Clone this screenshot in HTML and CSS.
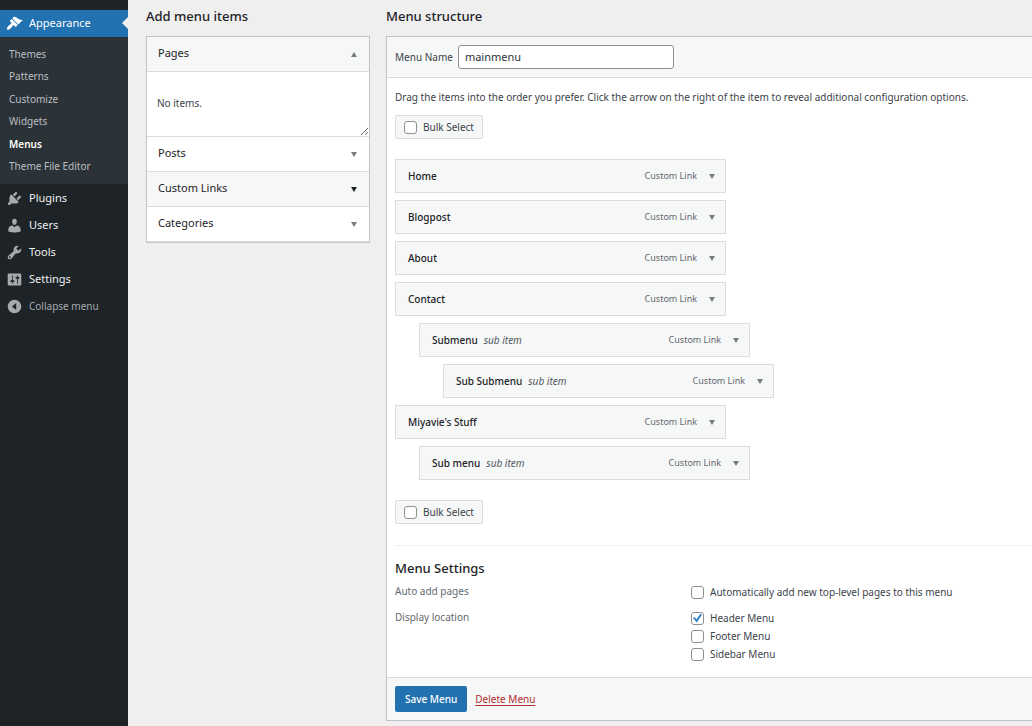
FILE: index.html
```html
<!DOCTYPE html>
<html lang="en">
<head>
<meta charset="utf-8">
<meta name="viewport" content="width=device-width, initial-scale=1">
<title>Menus</title>
<link rel="stylesheet" href="styles.css">
</head>
<body>
<div class="layout">
  <nav class="sidebar" aria-label="Main menu">
    <a class="nav-item current" href="#">
      <svg class="icon" viewBox="0 0 20 20" aria-hidden="true"><path d="M14.48 11.06L7.41 3.99l1.5-1.5c.5-.56 2.3-.47 3.51.32 1.21.8 1.43 1.28 2.91 2.1 1.18.64 2.45 1.26 4.45.85zm-.71.71L6.7 4.7 4.93 6.47c-.39.39-.39 1.02 0 1.41l1.06 1.06c.39.39.39 1.03 0 1.42-.6.6-1.43 1.11-2.21 1.69-.35.26-.7.53-1.01.84C1.43 14.23.4 16.08 1.4 17.07c.99 1 2.84-.03 4.18-1.36.31-.31.58-.66.85-1.02.57-.78 1.08-1.61 1.69-2.21.39-.39 1.02-.39 1.41 0l1.06 1.06c.39.39 1.02.39 1.41 0z"/></svg>
      Appearance
    </a>
    <ul class="submenu">
      <li><a href="#">Themes</a></li>
      <li><a href="#">Patterns</a></li>
      <li><a href="#">Customize</a></li>
      <li><a href="#">Widgets</a></li>
      <li><a class="active" href="#">Menus</a></li>
      <li><a href="#">Theme File Editor</a></li>
    </ul>
    <a class="nav-item" href="#">
      <svg class="icon" viewBox="0 0 20 20" aria-hidden="true"><path d="M13.11 4.36L9.87 7.6 8 5.73l3.24-3.24c.35-.34 1.05-.2 1.56.32.52.51.66 1.21.31 1.55zm-8 1.77l.91-1.12 9.01 9.01-1.19.84c-.71.71-2.63 1.16-3.82 1.16H6.14L4.9 17.26c-.59.59-1.54.59-2.12 0-.59-.58-.59-1.53 0-2.12l1.24-1.24v-3.88c0-1.13.4-3.19 1.09-3.89zm7.26 3.97l3.24-3.24c.34-.35 1.04-.21 1.55.31.52.51.66 1.21.31 1.55l-3.24 3.25z"/></svg>
      Plugins
    </a>
    <a class="nav-item" href="#">
      <svg class="icon" viewBox="0 0 20 20" aria-hidden="true"><path d="M10 9.25c-2.27 0-2.73-3.44-2.73-3.44C7 4.02 7.82 2 9.97 2c2.16 0 2.98 2.02 2.71 3.81 0 0-.41 3.44-2.68 3.44zm0 2.57L12.72 10c2.39 0 4.52 2.33 4.52 4.53v2.49s-3.65 1.13-7.24 1.13c-3.65 0-7.24-1.13-7.24-1.13v-2.49c0-2.25 1.94-4.48 4.47-4.48z"/></svg>
      Users
    </a>
    <a class="nav-item" href="#">
      <svg class="icon" viewBox="0 0 20 20" aria-hidden="true"><path d="M16.68 9.77c-1.34 1.34-3.3 1.67-4.95.99l-5.41 6.52c-.99.99-2.59.99-3.58 0s-.99-2.59 0-3.57l6.52-5.42c-.68-1.65-.35-3.61.99-4.95 1.28-1.28 3.12-1.62 4.72-1.06l-2.89 2.89 2.82 2.82 2.86-2.87c.53 1.58.18 3.39-1.08 4.65zM3.81 16.21c.4.39 1.04.39 1.43 0 .4-.4.4-1.04 0-1.43-.39-.4-1.03-.4-1.43 0-.39.39-.39 1.03 0 1.43z"/></svg>
      Tools
    </a>
    <a class="nav-item" href="#">
      <svg class="icon" viewBox="0 0 20 20" aria-hidden="true"><path fill-rule="evenodd" d="M18 16V4c0-.55-.45-1-1-1H3c-.55 0-1 .45-1 1v12c0 .55.45 1 1 1h14c.55 0 1-.45 1-1zM8 11h1c.55 0 1 .45 1 1s-.45 1-1 1H8v1.500c0 .28-.22.5-.5.5s-.5-.22-.5-.5V13H6c-.55 0-1-.45-1-1s.45-1 1-1h1V5.500c0-.28.22-.5.5-.5s.5.22.5.5zm5-2h-1c-.55 0-1-.45-1-1s.45-1 1-1h1V5.500c0-.28.22-.5.5-.5s.5.22.5.5V7h1c.55 0 1 .45 1 1s-.45 1-1 1h-1v5.500c0 .28-.22.5-.5.5s-.5-.22-.5-.5z"/></svg>
      Settings
    </a>
    <button class="nav-item collapse" type="button">
      <svg class="icon" viewBox="0 0 20 20" aria-hidden="true"><path fill-rule="evenodd" d="M10 2a8 8 0 1 0 0 16a8 8 0 1 0 0-16zM12 6v8L7 10z"/></svg>
      Collapse menu
    </button>
  </nav>

  <main class="content">
    <section class="add-items">
      <h2 class="title">Add menu items</h2>
      <div class="accordion">
        <button class="acc-head shaded" type="button" aria-expanded="true">Pages <span class="arrow up"></span></button>
        <div class="acc-body"><p>No items.</p></div>
        <button class="acc-head" type="button" aria-expanded="false">Posts <span class="arrow"></span></button>
        <button class="acc-head shaded hovered" type="button" aria-expanded="false">Custom Links <span class="arrow"></span></button>
        <button class="acc-head" type="button" aria-expanded="false">Categories <span class="arrow"></span></button>
      </div>
    </section>

    <section class="structure">
      <h2 class="title">Menu structure</h2>
      <form class="panel">
        <div class="panel-head">
          <label for="menu-name">Menu Name</label>
          <input class="text-input" id="menu-name" type="text" value="mainmenu">
        </div>
        <div class="panel-body">
          <p class="hint">Drag the items into the order you prefer. Click the arrow on the right of the item to reveal additional configuration options.</p>
          <label class="bulk"><input class="check" type="checkbox"> Bulk Select</label>
          <ul class="items">
            <li class="item"><span class="name">Home</span><span class="type">Custom Link</span><button class="toggle" type="button" aria-label="Edit Home"><span class="arrow"></span></button></li>
            <li class="item"><span class="name">Blogpost</span><span class="type">Custom Link</span><button class="toggle" type="button" aria-label="Edit Blogpost"><span class="arrow"></span></button></li>
            <li class="item"><span class="name">About</span><span class="type">Custom Link</span><button class="toggle" type="button" aria-label="Edit About"><span class="arrow"></span></button></li>
            <li class="item"><span class="name">Contact</span><span class="type">Custom Link</span><button class="toggle" type="button" aria-label="Edit Contact"><span class="arrow"></span></button></li>
            <li class="item depth-1"><span class="name">Submenu</span><i class="sub">sub item</i><span class="type">Custom Link</span><button class="toggle" type="button" aria-label="Edit Submenu"><span class="arrow"></span></button></li>
            <li class="item depth-2"><span class="name">Sub Submenu</span><i class="sub">sub item</i><span class="type">Custom Link</span><button class="toggle" type="button" aria-label="Edit Sub Submenu"><span class="arrow"></span></button></li>
            <li class="item"><span class="name">Miyavie's Stuff</span><span class="type">Custom Link</span><button class="toggle" type="button" aria-label="Edit Miyavie's Stuff"><span class="arrow"></span></button></li>
            <li class="item depth-1"><span class="name">Sub menu</span><i class="sub">sub item</i><span class="type">Custom Link</span><button class="toggle" type="button" aria-label="Edit Sub menu"><span class="arrow"></span></button></li>
          </ul>
          <label class="bulk"><input class="check" type="checkbox"> Bulk Select</label>
          <div class="settings">
            <h3 class="title">Menu Settings</h3>
            <div class="setting" role="group" aria-labelledby="auto-add">
              <span class="legend" id="auto-add">Auto add pages</span>
              <div class="options">
                <label class="option"><input class="check" type="checkbox"> Automatically add new top-level pages to this menu</label>
              </div>
            </div>
            <div class="setting" role="group" aria-labelledby="location">
              <span class="legend" id="location">Display location</span>
              <div class="options">
                <label class="option"><input class="check" type="checkbox" checked> Header Menu</label>
                <label class="option"><input class="check" type="checkbox"> Footer Menu</label>
                <label class="option"><input class="check" type="checkbox"> Sidebar Menu</label>
              </div>
            </div>
          </div>
        </div>
        <div class="panel-foot">
          <button class="save" type="submit">Save Menu</button>
          <a class="delete" href="#">Delete Menu</a>
        </div>
      </form>
    </section>
  </main>
</div>
</body>
</html>
```

FILE: styles.css
```css
* { box-sizing: border-box; }

body {
  margin: 0;
  background: #efefef;
  color: #3c434a;
  font: 10px/16px "Noto Sans", "Open Sans", sans-serif;
}

p, ul, h2, h3 { margin: 0; padding: 0; }
ul { list-style: none; }
button, input { font: inherit; color: inherit; }
button { cursor: pointer; }

.layout { display: flex; min-height: 100vh; }

/* Sidebar */
.sidebar {
  flex: none;
  width: 128px;
  padding-top: 10px;
  background: #1d2327;
}

.nav-item {
  display: flex;
  align-items: center;
  gap: 6px;
  width: 100%;
  height: 27px;
  padding: 0 6px 1px;
  border: 0;
  background: none;
  color: #f0f0f1;
  font-size: 11px;
  text-decoration: none;
}

.icon { width: 17px; height: 17px; fill: #a7aaad; }

.current { position: relative; background: #2271b1; color: #fff; }
.current .icon { fill: #fff; }
.current::after {
  content: "";
  position: absolute;
  right: 0;
  top: 7px;
  border: 6px solid transparent;
  border-left-width: 0;
  border-right-color: #efefef;
}

.collapse { color: #a7aaad; font-size: 10px; }

.submenu {
  display: flex;
  flex-direction: column;
  justify-content: space-between;
  min-height: 147px;
  margin-bottom: 1px;
  padding: 6px 9px 7px;
  background: #2c3338;
  line-height: 22px;
}
.submenu a { color: #bbbec1; text-decoration: none; }
.submenu .active { color: #fff; font-weight: 600; }

/* Content */
.content {
  flex: 1;
  display: flex;
  align-items: flex-start;
  gap: 16px;
  min-width: 0;
  padding: 6px 0 5px 18px;
}

.title {
  color: #1d2327;
  font-size: 13px;
  line-height: 20px;
  font-weight: 500;
}

.add-items { flex: none; width: 224px; }

.accordion {
  margin-top: 10px;
  border: 1px solid #c3c4c7;
  background: #fff;
}

.acc-head {
  display: flex;
  align-items: center;
  justify-content: space-between;
  width: 100%;
  height: 35px;
  padding: 0 11px 2px;
  border: 0;
  border-bottom: 1px solid #dcdcde;
  background: #fff;
  color: #1d2327;
  font-size: 11px;
}
.shaded { background: #f6f7f7; }

.acc-body {
  height: 65px;
  padding: 23px 10px;
  border-bottom: 1px solid #dcdcde;
  overflow: auto;
  resize: vertical;
}

.arrow {
  border: 3px solid transparent;
  border-top: 5px solid #787c82;
  border-bottom-width: 0;
}
.acc-head .arrow { margin: 2px 1px 0 0; }
.arrow.up {
  border-top-width: 0;
  border-bottom: 5px solid #787c82;
}
.hovered .arrow { border-top-color: #1d2327; }

/* Menu editor */
.structure { flex: 1; min-width: 0; }

.panel {
  margin-top: 10px;
  border: 1px solid #c3c4c7;
  border-right: 0;
  background: #fff;
}

.panel-head {
  display: flex;
  align-items: center;
  gap: 5px;
  padding: 8px;
  border-bottom: 1px solid #dcdcde;
  background: #f6f7f7;
}

.text-input {
  width: 216px;
  height: 24px;
  padding: 0 6px 1px;
  border: 1px solid #8c8f94;
  border-radius: 3px;
  background: #fff;
  color: #2c3338;
  font-size: 11px;
}

.panel-body { padding: 11px 0 14px 8px; }

.bulk {
  display: inline-flex;
  align-items: center;
  gap: 6px;
  height: 24px;
  margin-top: 10px;
  padding: 0 8px;
  border: 1px solid #dcdcde;
  border-radius: 2px;
  background: #f6f7f7;
  vertical-align: top;
}

.check {
  flex: none;
  display: grid;
  place-items: center;
  width: 13px;
  height: 13px;
  margin: 0;
  border: 1px solid #8c8f94;
  border-radius: 3px;
  background: #fff;
  appearance: none;
}
.check:checked::before {
  content: "";
  width: 9px;
  height: 9px;
  background: #3582c4;
  clip-path: polygon(0 50%, 18% 40%, 38% 64%, 82% 4%, 100% 14%, 42% 100%);
}

.items {
  display: flex;
  flex-direction: column;
  gap: 7px;
  margin: 20px 0 10px;
}

.item {
  display: flex;
  align-items: center;
  width: 331px;
  height: 34px;
  padding: 0 10px 0 12px;
  border: 1px solid #dcdcde;
  background: #f6f7f7;
}
.depth-1 { margin-left: 24px; }
.depth-2 { margin-left: 48px; }

.name { color: #1d2327; font-weight: 500; }
.sub { margin-left: 6px; color: #50575e; }
.type { margin-left: auto; color: #646970; font-size: 9px; }

.toggle {
  display: flex;
  margin-left: 12px;
  padding: 0;
  border: 0;
  background: none;
}

.settings {
  margin-top: 21px;
  padding-top: 12px;
  border-top: 1px solid #f0f0f1;
}

.setting {
  display: grid;
  grid-template-columns: 296px 1fr;
  margin-bottom: 8px;
}
.settings .title { margin-bottom: 5px; }
.setting:last-child { margin-bottom: 0; }
.legend { color: #646970; }
.option {
  display: flex;
  align-items: center;
  gap: 6px;
  height: 18px;
}

.panel-foot {
  display: flex;
  align-items: center;
  gap: 8px;
  padding: 8px;
  border-top: 1px solid #dcdcde;
  background: #f6f7f7;
}

.save {
  height: 26px;
  padding: 0 10px;
  border: 0;
  border-radius: 2px;
  background: #2271b1;
  color: #fff;
  font-weight: 500;
}

.delete { color: #b32d2e; text-underline-offset: 2px; }
```
